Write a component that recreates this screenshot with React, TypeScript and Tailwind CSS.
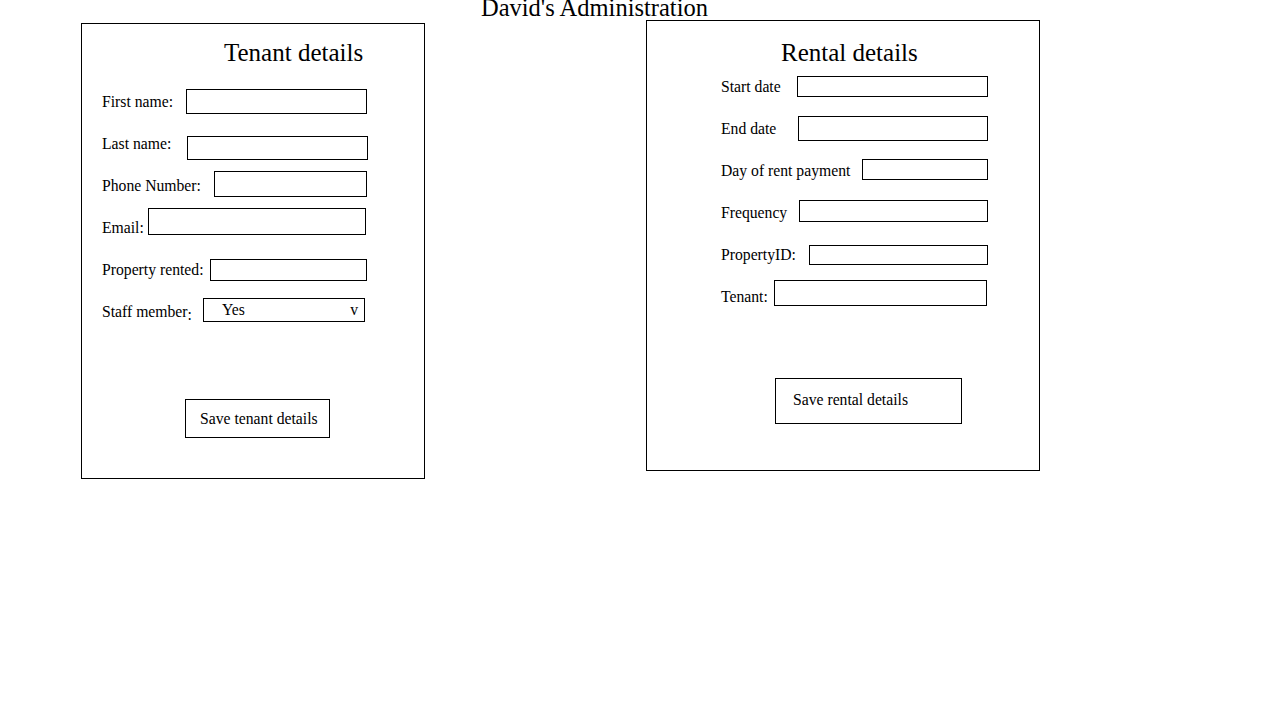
const serif = { fontFamily: '"Liberation Serif", "Times New Roman", serif' };

type Field = { label: string; labelW: string; box: string };

const tenantFields: Field[] = [
  { label: "First name:", labelW: "w-[84px]", box: "mt-[-3px] h-[25px] w-[181px]" },
  { label: "Last name:", labelW: "w-[85px]", box: "mt-[2px] h-[24px] w-[181px]" },
  { label: "Phone Number:", labelW: "w-[112px]", box: "mt-[-5px] h-[26px] w-[153px]" },
  { label: "Email:", labelW: "w-[46px]", box: "mt-[-10px] h-[27px] w-[218px]" },
  { label: "Property rented:", labelW: "w-[108px]", box: "mt-[-1px] h-[22px] w-[157px]" },
];

const rentalFields: Field[] = [
  { label: "Start date", labelW: "w-[76px]", box: "mt-[-1px] h-[21px] w-[191px]" },
  { label: "End date", labelW: "w-[77px]", box: "mt-[-3px] h-[25px] w-[190px]" },
  { label: "Day of rent payment", labelW: "w-[141px]", box: "mt-[-2px] h-[21px] w-[126px]" },
  { label: "Frequency", labelW: "w-[78px]", box: "mt-[-3px] h-[22px] w-[189px]" },
  { label: "PropertyID:", labelW: "w-[88px]", box: "mt-[0px] h-[20px] w-[179px]" },
  { label: "Tenant:", labelW: "w-[53px]", box: "mt-[-7px] h-[26px] w-[213px]" },
];

function FieldRow({ f }: { f: Field }) {
  return (
    <div className="flex h-[42px] items-start">
      <span className={`${f.labelW} shrink-0 whitespace-nowrap pt-[1px] text-[15.7px] leading-[17px]`}>{f.label}</span>
      <input type="text" className={`${f.box} shrink-0 border border-black bg-white outline-none`} />
    </div>
  );
}

export default function App() {
  return (
    <div className="min-h-[720px] w-[1280px] bg-white text-black" style={serif}>
      <div className="ml-[481px] mt-[-4px] h-[23px] whitespace-nowrap text-[24.5px] leading-[24px]">
        David's Administration
      </div>

      <div className="flex items-start">
        {/* tenant */}
        <div className="ml-[81px] mt-[4px] flex h-[456px] w-[344px] flex-col border border-black">
          <h2 className="ml-[142px] mt-[15px] whitespace-nowrap text-[25px] leading-[28px]">Tenant details</h2>
          <div className="ml-[20px] mt-[25px] flex flex-col">
            {tenantFields.map((f) => (
              <FieldRow key={f.label} f={f} />
            ))}
            <div className="flex h-[42px] items-start">
              <span className="w-[101px] shrink-0 whitespace-nowrap pt-[1px] text-[15.7px] leading-[17px]">
                Staff member<span className="relative top-[3px]">:</span>
              </span>
              <div className="mt-[-4px] flex h-[24px] w-[162px] shrink-0 items-start justify-between border border-black pl-[18px] pr-[6px] pt-[2px] text-[15.7px] leading-[17px]">
                <span>Yes</span>
                <span>v</span>
              </div>
            </div>
          </div>
          <button
            type="button"
            className="ml-[103px] mt-[55px] flex h-[39px] w-[145px] items-start border border-black bg-white pl-[14px] pt-[10px] text-[15.7px] leading-[17px] whitespace-nowrap"
          >
            Save tenant details
          </button>
        </div>

        {/* rental */}
        <div className="ml-[221px] mt-[1px] flex h-[451px] w-[394px] flex-col border border-black">
          <h2 className="ml-[134px] mt-[18px] whitespace-nowrap text-[25px] leading-[28px]">Rental details</h2>
          <div className="ml-[74px] mt-[10px] flex flex-col">
            {rentalFields.map((f) => (
              <FieldRow key={f.label} f={f} />
            ))}
          </div>
          <button
            type="button"
            className="ml-[128px] mt-[49px] flex h-[46px] w-[187px] items-start border border-black bg-white pl-[17px] pt-[12px] text-[15.7px] leading-[17px] whitespace-nowrap"
          >
            Save rental details
          </button>
        </div>
      </div>
    </div>
  );
}
